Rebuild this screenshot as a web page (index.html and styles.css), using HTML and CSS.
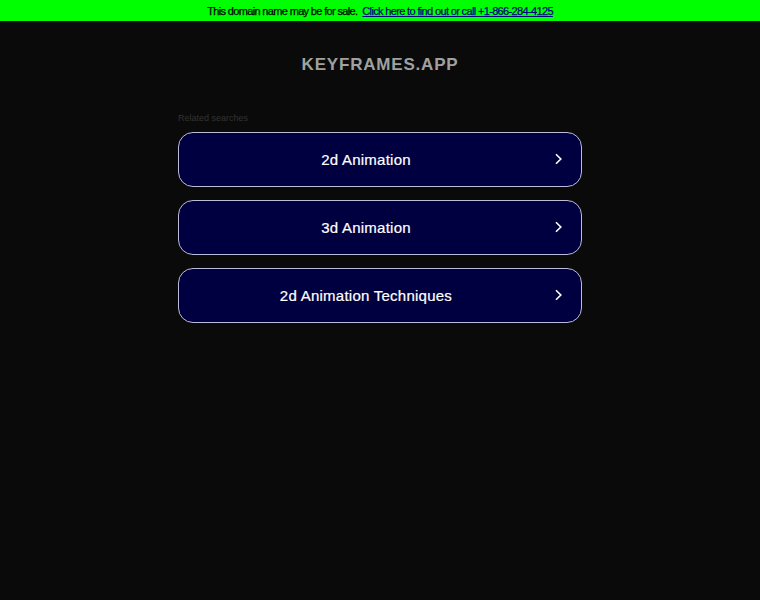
FILE: index.html
```html
<!DOCTYPE html>
<html>
<head>
<meta charset="utf-8">
<link rel="stylesheet" href="styles.css">
</head>
<body>
<div class="topbar">This domain name may be for sale.&nbsp; <a href="#">Click here to find out or call +1-866-284-4125</a></div>
<div class="title">KEYFRAMES.APP</div>
<div class="main">
  <div class="label">Related searches</div>
  <div class="list">
    <a class="item" href="#"><span class="txt">2d Animation</span><svg class="chev" width="10" height="14" viewBox="0 0 10 14"><path d="M3 2.3 L7.8 7 L3 11.7" fill="none" stroke="#fff" stroke-width="1.6"/></svg></a>
    <a class="item" href="#"><span class="txt">3d Animation</span><svg class="chev" width="10" height="14" viewBox="0 0 10 14"><path d="M3 2.3 L7.8 7 L3 11.7" fill="none" stroke="#fff" stroke-width="1.6"/></svg></a>
    <a class="item" href="#"><span class="txt">2d Animation Techniques</span><svg class="chev" width="10" height="14" viewBox="0 0 10 14"><path d="M3 2.3 L7.8 7 L3 11.7" fill="none" stroke="#fff" stroke-width="1.6"/></svg></a>
  </div>
</div>
</body>
</html>
```
FILE: styles.css
```css
html, body { margin: 0; padding: 0; }
body {
  background: #0a0a0a;
  font-family: "Liberation Sans", Arial, sans-serif;
  height: 600px;
}
.topbar {
  background: #00ff00;
  height: 21px;
  line-height: 22px;
  text-align: center;
  font-size: 11px;
  letter-spacing: -0.65px;
  color: #000;
  -webkit-text-stroke: 0.25px #000;
}
.topbar a { color: #000080; text-decoration: underline; -webkit-text-stroke: 0.25px #000080; }
.title {
  text-align: center;
  color: #a0a0a0;
  font-size: 17px;
  font-weight: bold;
  letter-spacing: 0.8px;
  margin-top: 33px;
  line-height: 22px;
}
.main {
  width: 404px;
  margin: 37px auto 0;
}
.label {
  color: #333;
  font-size: 9px;
  line-height: 11px;
  margin-bottom: 8px;
}
.list { display: flex; flex-direction: column; gap: 13px; }
.item {
  display: flex;
  align-items: center;
  justify-content: center;
  position: relative;
  height: 53px;
  border: 1px solid #bcbcdc;
  border-radius: 15px;
  background: #000040;
  color: #fff;
  text-decoration: none;
  font-size: 15px;
  letter-spacing: 0.25px;
  -webkit-text-stroke: 0.2px #fff;
}
.txt { margin-left: -28px; }
.chev { position: absolute; right: 18px; top: 19px; }
```
